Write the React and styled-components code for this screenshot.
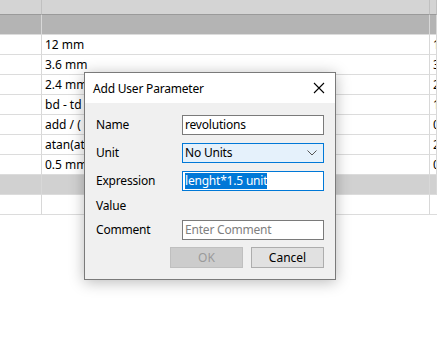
import React from "react";
import styled, { createGlobalStyle } from "styled-components";

const GlobalStyle = createGlobalStyle`
  html, body {
    margin: 0;
    padding: 0;
    background: #ffffff;
    font-family: "Noto Sans", "Open Sans", sans-serif;
    font-size: 12px;
    color: #000;
  }
`;

const Page = styled.div`
  position: relative;
  width: 437px;
  height: 350px;
  overflow: hidden;
  background: #fff;
`;

const Grid = styled.div`
  display: grid;
  grid-template-columns: 42px 388px 1fr;
`;

const Cell = styled.div`
  height: ${(p) => (p.$head ? 14 : 19)}px;
  border-right: 1px solid ${(p) => (p.$tone === "head" ? "#c0c0c0" : "#d8d8d8")};
  border-bottom: 1px solid ${(p) => (p.$head ? "#9a9a9a" : "#dcdcdc")};
  background: ${(p) =>
    p.$tone === "head" ? "#d4d4d4" : p.$tone === "group" ? (p.$light ? "#d1d1d1" : "#b4b4b4") : "#fff"};
  padding-left: 3px;
  line-height: 19px;
  white-space: nowrap;
  overflow: hidden;
  &:last-child {
    border-right: none;
  }
`;

const Dialog = styled.div`
  position: absolute;
  left: 84px;
  top: 72px;
  width: 250px;
  height: 206px;
  background: #f0f0f0;
  border: 1px solid #7a7a7a;
  box-shadow: 0 2px 14px rgba(0, 0, 0, 0.28);
  display: flex;
  flex-direction: column;
`;

const TitleBar = styled.div`
  height: 30px;
  background: #fff;
  display: flex;
  align-items: center;
  justify-content: space-between;
  padding: 0 10px 0 8px;
`;

const Title = styled.span`
  font-size: 12px;
  letter-spacing: -0.2px;
`;

const Form = styled.div`
  display: grid;
  grid-template-columns: 86px 142px;
  align-items: center;
  row-gap: 8px;
  padding: 12px 0 0 11px;
`;

const Label = styled.div`
  font-size: 12px;
  height: ${(p) => (p.$short ? 13 : 20)}px;
  line-height: ${(p) => (p.$short ? 13 : 20)}px;
  letter-spacing: -0.2px;
`;

const Field = styled.div`
  box-sizing: border-box;
  height: 20px;
  border: 1px solid ${(p) => (p.$active ? "#0078d7" : "#7a7a7a")};
  background: ${(p) => (p.$select ? "#e5f1fb" : "#fff")};
  color: ${(p) => (p.$placeholder ? "#808080" : "#000")};
  padding: 0 6px 0 2px;
  line-height: 18px;
  display: flex;
  align-items: center;
  justify-content: space-between;
  letter-spacing: -0.2px;
  white-space: nowrap;
  overflow: hidden;
`;

const Selected = styled.span`
  background: #0078d7;
  color: #fff;
  line-height: 16px;
`;

const Buttons = styled.div`
  display: flex;
  justify-content: flex-end;
  gap: 8px;
  padding: 7px 11px 0 0;
`;

const Button = styled.div`
  box-sizing: border-box;
  width: 73px;
  height: 21px;
  display: flex;
  align-items: center;
  justify-content: center;
  background: ${(p) => (p.$disabled ? "#cccccc" : "#e1e1e1")};
  border: 1px solid ${(p) => (p.$disabled ? "#bfbfbf" : "#adadad")};
  color: ${(p) => (p.$disabled ? "#9a9a9a" : "#000")};
`;

const rows = ["12 mm", "3.6 mm", "2.4 mm", "bd - td", "add / ( 2 * mm )", "atan(at)", "0.5 mm"];
const right = ["1", "3", "2", "1", "0", "2", "0"];

export default function App() {
  return (
    <Page>
      <GlobalStyle />
      <Grid>
        <Cell $head $tone="head" />
        <Cell $head $tone="head" />
        <Cell $head $tone="head" />
        <Cell $tone="group" />
        <Cell $tone="group" />
        <Cell $tone="group" />
        {rows.map((r, i) => (
          <React.Fragment key={i}>
            <Cell />
            <Cell>{r}</Cell>
            <Cell>{right[i]}</Cell>
          </React.Fragment>
        ))}
        <Cell $tone="group" $light />
        <Cell $tone="group" $light />
        <Cell $tone="group" $light />
        <Cell />
        <Cell />
        <Cell />
      </Grid>
      <Dialog>
        <TitleBar>
          <Title>Add User Parameter</Title>
          <svg width="12" height="12" viewBox="0 0 12 12">
            <path d="M1 1 L11 11 M11 1 L1 11" stroke="#000" strokeWidth="1.1" />
          </svg>
        </TitleBar>
        <Form>
          <Label>Name</Label>
          <Field>revolutions</Field>
          <Label>Unit</Label>
          <Field $active $select>
            <span>No Units</span>
            <svg width="10" height="6" viewBox="0 0 10 6">
              <path d="M0.5 0.5 L5 5 L9.5 0.5" fill="none" stroke="#555" strokeWidth="1" />
            </svg>
          </Field>
          <Label>Expression</Label>
          <Field $active>
            <Selected>lenght*1.5 unit</Selected>
          </Field>
          <Label $short>Value</Label>
          <Label $short />
          <Label>Comment</Label>
          <Field $placeholder>Enter Comment</Field>
        </Form>
        <Buttons>
          <Button $disabled>OK</Button>
          <Button>Cancel</Button>
        </Buttons>
      </Dialog>
    </Page>
  );
}
